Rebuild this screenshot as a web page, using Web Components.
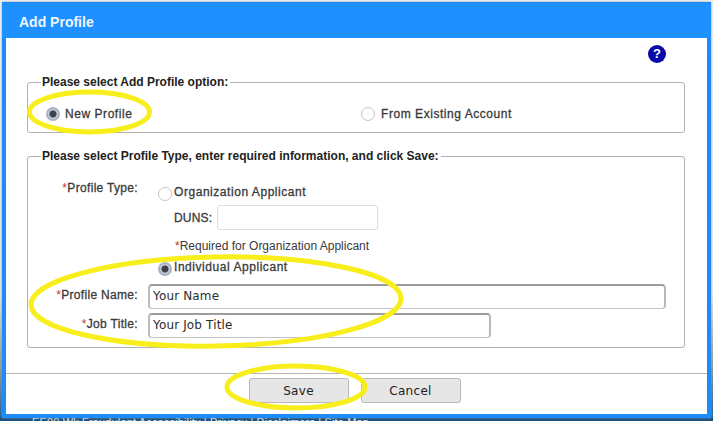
<!DOCTYPE html>
<html><head><meta charset="utf-8"><style>
html,body{margin:0;height:421px;overflow:hidden;background:#d8dde2}
</style></head><body>
<template id="t-page"><style>
:host{display:block;position:relative;width:713px;height:421px;overflow:hidden;background:linear-gradient(#eef0f2 0,#e4e6e8 70%,#8d9297 88%,#1c5c94 100%);font-family:"Liberation Sans",Arial,sans-serif}
.footer{position:absolute;left:32px;top:416px;font:11px "Liberation Sans",sans-serif;color:#dfe8f0;white-space:nowrap;letter-spacing:.15px}
.strip{position:absolute;left:0;right:0;top:417px;height:4px;background:#17507f}
.marks{position:absolute;left:0;top:0;pointer-events:none}
</style><div class="strip"></div><div class="footer">EE00 Wk Fraudulent Accessibility | Privacy | Disclaimers | Site Map</div><slot></slot>
<svg class="marks" width="713" height="421" fill="none" stroke="#f7ee1c" stroke-width="5">
<ellipse cx="89.5" cy="112" rx="60" ry="20"/>
<ellipse cx="216" cy="301.5" rx="185" ry="44.5" transform="rotate(-1 216 301)"/>
<ellipse cx="296" cy="387" rx="69" ry="21"/>
</svg></template>

<template id="t-dialog"><style>
:host{position:absolute;left:2px;top:2px;width:701px;height:411px;display:flex;flex-direction:column;background:#fff;border:solid #1e8cf8;border-width:1px 4px 4px 4px;box-sizing:content-box;box-shadow:0 0 2px #999}
header{flex:none;height:35px;box-sizing:border-box;margin:0 -4px;background:#1e90ff;color:#eef6ff;font-weight:bold;font-size:14px;display:flex;align-items:center;padding:3px 0 0 17px}
main{flex:1;display:flex;flex-direction:column;padding:0 21px;min-height:0}
.help{height:37px;flex:none;display:flex;justify-content:flex-end;align-items:flex-start;padding:7px 20px 0 0;box-sizing:border-box}
.gap{display:flex;flex-direction:column;gap:16px}
footer{flex:none;height:41px;box-sizing:border-box;border-top:1px solid #b4b4b4;display:flex;justify-content:center;gap:12px;align-items:flex-start;padding:4px 4px 0 0}
</style><header><slot name="title"></slot></header>
<main><div class="help"><slot name="help"></slot></div><div class="gap"><slot></slot></div></main>
<footer><slot name="actions"></slot></footer></template>

<template id="t-group"><style>
:host{display:block}
fieldset{margin:0;border:1px solid #b2b2b2;border-radius:3px;padding:0;width:656px;box-sizing:content-box}
legend{margin-left:13px;padding:0 2px 0 1px;font:bold 12px "Liberation Sans",sans-serif;color:#222}
</style><fieldset><legend><slot name="legend"></slot></legend><slot></slot></fieldset></template>

<template id="t-radio"><style>
:host{display:inline-flex;align-items:flex-start;gap:var(--gap,5px);font:12px/14px "Liberation Sans",sans-serif;color:#3a3a3a;letter-spacing:.55px;-webkit-text-stroke:.3px #3a3a3a}
i{width:14px;height:14px;border-radius:50%;box-sizing:border-box;border:1px solid #c9c4c2;background:#fff;display:block;flex:none;margin-top:var(--drop,0)}
:host([on]) i{border:2px solid #a9b3c6;background:radial-gradient(circle,#3d4148 0 3.2px,#c4cad4 3.9px)}
</style><i></i><slot></slot></template>

<template id="t-label"><style>
:host{display:block;text-align:right;font:12px/14px "Liberation Sans",sans-serif;color:#3a3a3a;letter-spacing:.32px;-webkit-text-stroke:.3px #3a3a3a;white-space:nowrap}
b{color:#c0392b;font-weight:normal;-webkit-text-stroke:0}
</style><b>*</b><slot></slot></template>

<template id="t-field"><style>
:host{display:block;box-sizing:border-box;height:25px;border:1px solid #c4c4c4;border-top:2px solid #9c9c9c;border-left:2px solid #bbb;border-right:2px solid #b8b8b8;border-radius:4px;font:12px "DejaVu Sans",sans-serif;color:#2c2c2c;letter-spacing:.15px;background:#fff;line-height:21px;padding-left:3px}
</style><slot></slot></template>

<template id="t-btn"><style>
:host{display:block;box-sizing:border-box;width:100px;height:25px;border:1px solid #b9b9b9;border-radius:3px;background:#e6e6e6;font:12px "DejaVu Sans",sans-serif;color:#222;text-align:center;line-height:24px;letter-spacing:.3px}
</style><slot></slot></template>

<template id="t-help"><style>
:host{display:block;width:18px;height:18px;border-radius:50%;background:#0a0aa8;color:#fff;font:bold 13px/18px "Liberation Sans",sans-serif;text-align:center}
</style>?</template>

<template id="t-option"><style>
:host{display:flex;height:43px;align-items:center;padding:6px 0 0 18px;box-sizing:border-box}
.a{width:315px;flex:none;display:flex}
::slotted([slot=b]){--gap:6px}
</style><div class="a"><slot name="a"></slot></div><slot name="b"></slot></template>

<template id="t-form"><style>
:host{display:grid;grid-template-columns:110px 1fr;column-gap:10px;height:184px;grid-template-rows:42px 25px 28px 26px 29px 34px;align-content:start;--gap:2px;--drop:2px}
</style><slot></slot></template>

<template id="t-duns"><style>
:host{display:flex;align-items:center;gap:5px;padding-left:26px;font:12px "Liberation Sans",sans-serif;color:#3a3a3a;letter-spacing:.2px;-webkit-text-stroke:.3px #3a3a3a}
i{display:block;width:161px;height:25px;box-sizing:border-box;border:1px solid #ddd;border-radius:3px;background:#fff}
</style><slot></slot><i></i></template>

<template id="t-req"><style>
:host{display:block;padding:9px 0 0 27px;font:12px/14px "Liberation Sans",sans-serif;color:#3a3a3a}
b{color:#c0392b;font-weight:normal}
</style><b>*</b><slot></slot></template>

<x-page>
<x-dialog>
<span slot="title">Add Profile</span>
<x-help slot="help"></x-help>
<x-group><span slot="legend">Please select Add Profile option:</span>
<x-option><x-radio slot="a" on>New Profile</x-radio><x-radio slot="b">From Existing Account</x-radio></x-option>
</x-group>
<x-group><span slot="legend">Please select Profile Type, enter required information, and click Save:</span>
<x-form>
<x-label style="margin-top:18px">Profile Type:</x-label>
<x-radio style="margin:22px 0 0 10px">Organization Applicant</x-radio>
<span></span><x-duns>DUNS:</x-duns>
<span></span><x-req>Required for Organization Applicant</x-req>
<span></span><x-radio on style="margin:2px 0 0 10px">Individual Applicant</x-radio>
<x-label style="margin-top:4px">Profile Name:</x-label><x-field style="width:518px">Your Name</x-field>
<x-label style="margin-top:4px">Job Title:</x-label><x-field style="width:343px">Your Job Title</x-field>
</x-form></x-group>
<x-btn slot="actions">Save</x-btn><x-btn slot="actions">Cancel</x-btn>
</x-dialog>
</x-page>
<script>
for(const [n,t] of Object.entries({'x-page':'t-page','x-dialog':'t-dialog','x-group':'t-group','x-radio':'t-radio','x-label':'t-label','x-field':'t-field','x-btn':'t-btn','x-help':'t-help','x-option':'t-option','x-form':'t-form','x-duns':'t-duns','x-req':'t-req'})){
customElements.define(n,class extends HTMLElement{constructor(){super();this.attachShadow({mode:'open'}).appendChild(document.getElementById(t).content.cloneNode(true))}});
}
</script>
</body></html>
